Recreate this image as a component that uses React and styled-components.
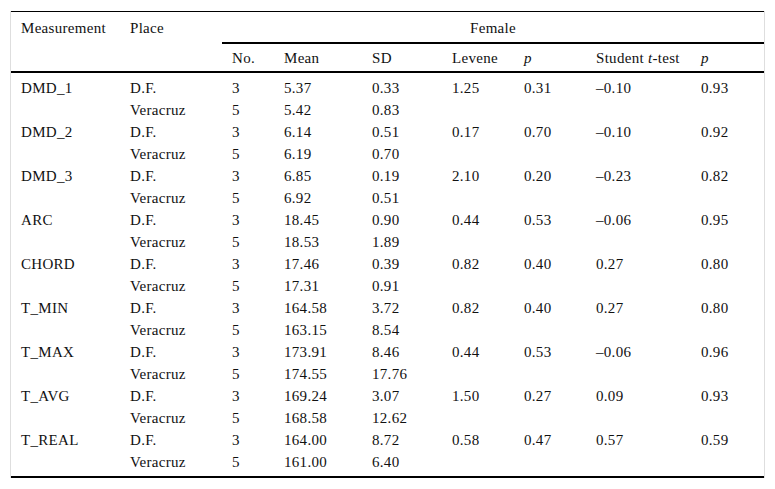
import React from "react";
import styled, { createGlobalStyle } from "styled-components";

const GlobalStyle = createGlobalStyle`
  html, body {
    margin: 0;
    padding: 0;
    background: #ffffff;
  }
`;

const Page = styled.div`
  padding: 11px 10px 0 10px;
  width: 755px;
`;

const Frame = styled.div`
  border-left: 1px solid #dedede;
  border-right: 1px solid #dedede;
`;

const Table = styled.table`
  width: 753px;
  border-collapse: collapse;
  table-layout: fixed;
  border-top: 1px solid #000;
  border-bottom: 2px solid #000;
  font-family: "Liberation Serif", "Times New Roman", serif;
  font-size: 15px;
  letter-spacing: 0.3px;
  color: #111;

  tbody tr:first-child td {
    padding-top: 4px;
  }
  tbody tr:last-child td {
    padding-bottom: 3px;
  }
`;

const HeadCell = styled.th`
  font-weight: normal;
  text-align: ${(p) => (p.$center ? "center" : "left")};
  vertical-align: top;
  padding: ${(p) => (p.$sub ? "3px 0 2px 10px" : "5px 0 3px 10px")};
  padding-left: ${(p) => (p.$center ? "0" : "10px")};
  line-height: 22px;
  white-space: nowrap;
  border-bottom: ${(p) => (p.$rule ? "2px solid #000" : "none")};
`;

const Cell = styled.td`
  padding: 0 0 0 10px;
  line-height: 22px;
  white-space: nowrap;
  vertical-align: top;
`;

const Em = styled.i`
  font-style: italic;
`;

const widths = [109, 102, 52, 88, 80, 72, 72, 105, 73];

const data = [
  ["DMD_1", "3", "5.37", "0.33", "1.25", "0.31", "–0.10", "0.93", "5", "5.42", "0.83"],
  ["DMD_2", "3", "6.14", "0.51", "0.17", "0.70", "–0.10", "0.92", "5", "6.19", "0.70"],
  ["DMD_3", "3", "6.85", "0.19", "2.10", "0.20", "–0.23", "0.82", "5", "6.92", "0.51"],
  ["ARC", "3", "18.45", "0.90", "0.44", "0.53", "–0.06", "0.95", "5", "18.53", "1.89"],
  ["CHORD", "3", "17.46", "0.39", "0.82", "0.40", "0.27", "0.80", "5", "17.31", "0.91"],
  ["T_MIN", "3", "164.58", "3.72", "0.82", "0.40", "0.27", "0.80", "5", "163.15", "8.54"],
  ["T_MAX", "3", "173.91", "8.46", "0.44", "0.53", "–0.06", "0.96", "5", "174.55", "17.76"],
  ["T_AVG", "3", "169.24", "3.07", "1.50", "0.27", "0.09", "0.93", "5", "168.58", "12.62"],
  ["T_REAL", "3", "164.00", "8.72", "0.58", "0.47", "0.57", "0.59", "5", "161.00", "6.40"],
];

const App = () => {
  return (
    <>
      <GlobalStyle />
      <Page>
        <Frame>
          <Table>
            <colgroup>
              {widths.map((w, i) => (
                <col key={i} style={{ width: w }} />
              ))}
            </colgroup>
            <thead>
              <tr>
                <HeadCell rowSpan={2} $rule>
                  Measurement
                </HeadCell>
                <HeadCell rowSpan={2} $rule>
                  Place
                </HeadCell>
                <HeadCell colSpan={7} $center $rule>
                  Female
                </HeadCell>
              </tr>
              <tr>
                <HeadCell $sub $rule>No.</HeadCell>
                <HeadCell $sub $rule>Mean</HeadCell>
                <HeadCell $sub $rule>SD</HeadCell>
                <HeadCell $sub $rule>Levene</HeadCell>
                <HeadCell $sub $rule>
                  <Em>p</Em>
                </HeadCell>
                <HeadCell $sub $rule>
                  Student <Em>t</Em>-test
                </HeadCell>
                <HeadCell $sub $rule>
                  <Em>p</Em>
                </HeadCell>
              </tr>
            </thead>
            <tbody>
              {data.map((r) => (
                <React.Fragment key={r[0]}>
                  <tr>
                    <Cell>{r[0]}</Cell>
                    <Cell>D.F.</Cell>
                    <Cell>{r[1]}</Cell>
                    <Cell>{r[2]}</Cell>
                    <Cell>{r[3]}</Cell>
                    <Cell>{r[4]}</Cell>
                    <Cell>{r[5]}</Cell>
                    <Cell>{r[6]}</Cell>
                    <Cell>{r[7]}</Cell>
                  </tr>
                  <tr>
                    <Cell></Cell>
                    <Cell>Veracruz</Cell>
                    <Cell>{r[8]}</Cell>
                    <Cell>{r[9]}</Cell>
                    <Cell>{r[10]}</Cell>
                    <Cell></Cell>
                    <Cell></Cell>
                    <Cell></Cell>
                    <Cell></Cell>
                  </tr>
                </React.Fragment>
              ))}
            </tbody>
          </Table>
        </Frame>
      </Page>
    </>
  );
};

export default App;
